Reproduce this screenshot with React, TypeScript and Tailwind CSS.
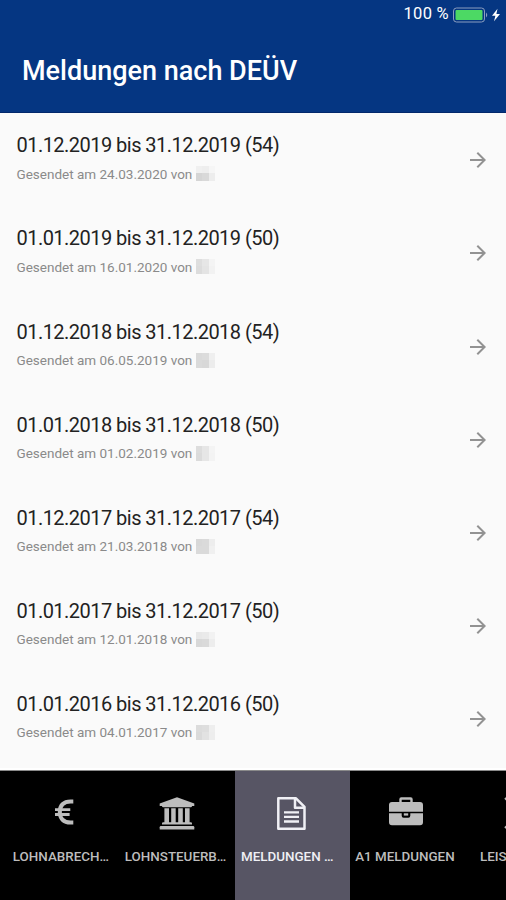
import type { ReactNode } from "react";

interface Report {
  title: string;
  sent: string;
  mask: string[];
}

// mask: three blocks for the upper row, then three for the lower row
const REPORTS: Report[] = [
  { title: "01.12.2019 bis 31.12.2019 (54)", sent: "24.03.2020", mask: ["#f0f0f0", "#eeeeee", "#f6f6f6", "#d5d5d5", "#d9d9d9", "#ededed"] },
  { title: "01.01.2019 bis 31.12.2019 (50)", sent: "16.01.2020", mask: ["#dedede", "#e6e6e6", "#f4f4f4", "#dcdcdc", "#e4e4e4", "#f2f2f2"] },
  { title: "01.12.2018 bis 31.12.2018 (54)", sent: "06.05.2019", mask: ["#dadada", "#dcdcdc", "#efefef", "#dadada", "#d8d8d8", "#ececec"] },
  { title: "01.01.2018 bis 31.12.2018 (50)", sent: "01.02.2019", mask: ["#dddddd", "#e6e6e6", "#f4f4f4", "#dbdbdb", "#e6e6e6", "#f3f3f3"] },
  { title: "01.12.2017 bis 31.12.2017 (54)", sent: "21.03.2018", mask: ["#d8d8d8", "#dadada", "#ededed", "#dadada", "#dadada", "#f0f0f0"] },
  { title: "01.01.2017 bis 31.12.2017 (50)", sent: "12.01.2018", mask: ["#e8e8e8", "#eaeaea", "#f2f2f2", "#d8d8d8", "#dadada", "#ededed"] },
  { title: "01.01.2016 bis 31.12.2016 (50)", sent: "04.01.2017", mask: ["#dcdcdc", "#dedede", "#eeeeee", "#dadada", "#e2e2e2", "#ededed"] },
];

interface Tab {
  label: string;
  icon: ReactNode;
  active?: boolean;
}

function EuroIcon() {
  return (
    <svg width="36" height="36" viewBox="0 0 36 36" fill="none" stroke="currentColor">
      <path d="M29.300 5.400H26.500C19.500 5.400 15.800 9.500 15.800 16s3.700 10.600 10.700 10.600h2.800" strokeWidth="4" />
      <path d="M11 13.700h15.300M11 18.500h14.600" strokeWidth="2.800" />
    </svg>
  );
}

function BankIcon() {
  return (
    <svg width="36" height="36" viewBox="0 0 36 36" fill="currentColor">
      <path d="M18 1.200 35.300 7.600V10H33q0 1.200-1.200 1.200H4.200Q3 11.200 3 10H.7V7.600z" />
      <path d="M5.400 12.300H10v14h2.200v-14h4.500v14h2.500v-14h4.600v14H26v-14h4.600v14h1.200q1.200 0 1.200 1.300v1H3v-1q0-1.300 1.200-1.300h1.200z" />
      <path d="M1.900 30h32.200q1.200 0 1.200 1.200v2.300H.7v-2.300Q.7 30 1.900 30z" />
    </svg>
  );
}

function DocumentIcon() {
  return (
    <svg width="36" height="36" viewBox="0 0 36 36" fill="none" stroke="currentColor" strokeWidth="2.500" strokeLinejoin="round">
      <path d="M5.300 2.300h17.700l8.500 8.500v22H5.300z" />
      <path d="M22 2.500v9.300h9.300" />
      <path d="M11 16.300h15M11 20.900h15M11 25.500h15" strokeWidth="2.300" />
    </svg>
  );
}

function BriefcaseIcon() {
  return (
    <svg width="36" height="36" viewBox="0 0 36 36" fill="currentColor">
      <path d="M11.300 6V3.300q0-2 2-2h9.400q2 0 2 2V6H32q3 0 3 3v6.700H1V9q0-3 3-3zm2.400 0h8.600V3.700h-8.600z" />
      <path d="M1 17.300h12.700v2.500q0 1.900 1.900 1.900h4.800q1.900 0 1.900-1.900v-2.500H35v8.900q0 3-3 3H4q-3 0-3-3z" />
      <path d="M15.800 17.300h4.400v2.300h-4.400z" />
    </svg>
  );
}

function ExpandIcon() {
  return (
    <svg width="36" height="36" viewBox="0 0 36 36" fill="none" stroke="currentColor" strokeWidth="2">
      <path d="m2 2 11 11M34 2 23 13M2 32l11-11M34 32 23 21" />
    </svg>
  );
}

const TABS: Tab[] = [
  { label: "LOHNABRECH…", icon: <EuroIcon /> },
  { label: "LOHNSTEUERB…", icon: <BankIcon /> },
  { label: "MELDUNGEN …", icon: <DocumentIcon />, active: true },
  { label: "A1 MELDUNGEN", icon: <BriefcaseIcon /> },
  { label: "LEISTUNGEN", icon: <ExpandIcon /> },
];

function StatusBar() {
  return (
    <div className="flex h-[29px] items-center justify-end pr-[5px] text-white">
      <span className="mr-[4px] text-[16.500px] leading-none tracking-[0.300px]">100 %</span>
      <svg width="48" height="16" viewBox="0 0 48 16">
        <rect x="0.500" y="1" width="31" height="14" rx="3" fill="none" stroke="#8b9dbf" />
        <rect x="2.500" y="3" width="27" height="10" rx="1" fill="#4cd964" />
        <path d="M33 5.500q2.500 2.500 0 5z" fill="#8b9dbf" />
        <path d="M44.500 1.800 39 8.800h3.400L41 14.300l6-7.300h-3.600z" fill="white" />
      </svg>
    </div>
  );
}

function MaskedName({ mask }: { mask: string[] }) {
  return (
    <span className="ml-1 grid grid-cols-[6px_7px_6px] grid-rows-[7px_8px]">
      {mask.map((color, i) => (
        <span key={i} style={{ backgroundColor: color }} />
      ))}
    </span>
  );
}

function ReportRow({ report }: { report: Report }) {
  return (
    <li className="flex h-[93.100px] items-start justify-between pt-[20.400px] pr-4 pl-[16.500px]">
      <div>
        <p className="text-[20px] leading-6 tracking-[-0.530px] whitespace-nowrap text-[#222222]">{report.title}</p>
        <div className="mt-[8.500px] flex h-4 items-center text-[13.500px] text-[#8a8a8a]">
          <span className="leading-4 whitespace-nowrap">Gesendet am {report.sent} von</span>
          <MaskedName mask={report.mask} />
        </div>
      </div>
      <svg className="mt-[15px]" width="24" height="24" viewBox="0 0 24 24" fill="#929292">
        <path d="m12 4-1.410 1.410L16.170 11H4v2h12.170l-5.580 5.590L12 20l8-8z" />
      </svg>
    </li>
  );
}

function TabButton({ tab }: { tab: Tab }) {
  return (
    <button
      className={`flex h-full w-[114.700px] shrink-0 flex-col items-center pt-[25px] pr-[2px] ${
        tab.active ? "bg-[#575564] text-[#f0f0f5]" : "text-[#bdbdbd]"
      }`}
    >
      {tab.icon}
      <span className={`mt-[16px] text-[13.400px] leading-[18px] font-medium whitespace-nowrap ${tab.active ? "pr-[8px]" : "pr-[2px]"}`}>
        {tab.label}
      </span>
    </button>
  );
}

export default function App() {
  return (
    <div className="flex h-[900px] w-[506px] flex-col overflow-hidden bg-[#fafafa] font-['Roboto',sans-serif]">
      <header className="h-[113px] shrink-0 border-b border-[#02286b] bg-[#053682]">
        <StatusBar />
        <h1 className="mt-[26px] ml-[22px] text-[27px] leading-8 font-medium text-white">Meldungen nach DEÜV</h1>
      </header>

      <ul className="min-h-0 flex-1 overflow-hidden border-b-2 border-white">
        {REPORTS.map((report) => (
          <ReportRow key={report.title} report={report} />
        ))}
      </ul>

      <nav className="flex h-[130px] shrink-0 overflow-hidden border-t border-[#8a8a8a] bg-black pl-[5.500px]">
        {TABS.map((tab) => (
          <TabButton key={tab.label} tab={tab} />
        ))}
      </nav>
    </div>
  );
}
